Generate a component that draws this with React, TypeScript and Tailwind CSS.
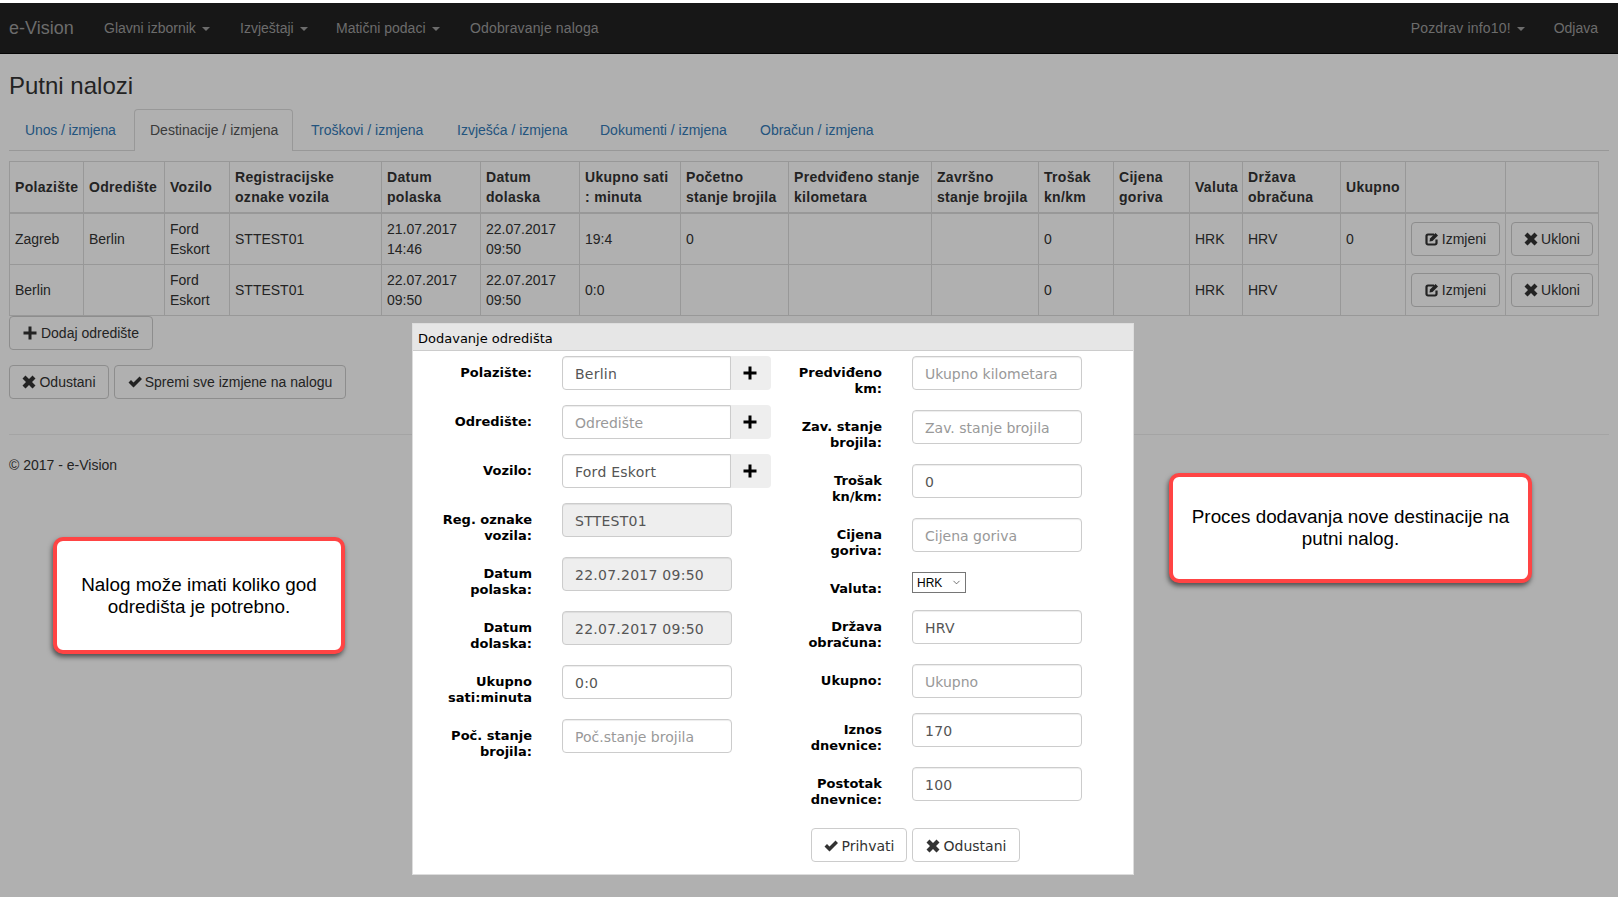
import type { ReactNode } from "react"
import { ChevronDown } from "lucide-react"

const stupci = ["w-[74px]", "w-[81px]", "w-[65px]", "w-[152px]", "w-[99px]", "w-[99px]", "w-[101px]", "w-[108px]", "w-[143px]", "w-[107px]", "w-[75px]", "w-[76px]", "w-[53px]", "w-[98px]", "w-[65px]", "w-[100px]", "w-[93px]"]

const zaglavlja = ["Polazište", "Odredište", "Vozilo", "Registracijske oznake vozila", "Datum polaska", "Datum dolaska", "Ukupno sati :\u00A0minuta", "Početno stanje brojila", "Predviđeno stanje kilometara", "Završno stanje brojila", "Trošak kn/km", "Cijena goriva", "Valuta", "Država obračuna", "Ukupno", "", ""]

const redovi = [
  ["Zagreb", "Berlin", "Ford Eskort", "STTEST01", "21.07.2017 14:46", "22.07.2017 09:50", "19:4", "0", "", "", "0", "", "HRK", "HRV", "0"],
  ["Berlin", "", "Ford Eskort", "STTEST01", "22.07.2017 09:50", "22.07.2017 09:50", "0:0", "", "", "", "0", "", "HRK", "HRV", ""],
]

const izbornik = [
  { naziv: "Glavni izbornik", caret: true, sirina: "w-[136px]" },
  { naziv: "Izvještaji", caret: true, sirina: "w-[96px]" },
  { naziv: "Matični podaci", caret: true, sirina: "w-[134px]" },
  { naziv: "Odobravanje naloga", caret: false, sirina: "w-[165px] tracking-[0.15px]" },
]

const kartice = [
  { naziv: "Unos / izmjena", sirina: "w-[123px] tracking-[-0.13px]" },
  { naziv: "Destinacije / izmjena", sirina: "w-[159px]" },
  { naziv: "Troškovi / izmjena", sirina: "w-[144px]" },
  { naziv: "Izvješća / izmjena", sirina: "w-[141px]" },
  { naziv: "Dokumenti / izmjena", sirina: "w-[158px]" },
  { naziv: "Obračun / izmjena", sirina: "w-[150px]" },
]

function Plus({ className = "w-[14px] h-[14px]" }: { className?: string }) {
  return (
    <svg viewBox="0 0 14 14" className={className} fill="currentColor">
      <path d="M5.500 .5h3v5h5v3h-5v5h-3v-5h-5v-3h5z" />
    </svg>
  )
}

function Ukloni() {
  return (
    <svg viewBox="0 0 14 14" className="h-[14px] w-[14px]" fill="currentColor">
      <path d="M3.500 .5 7 4 10.500 .5 13.500 3.500 10 7l3.500 3.500-3 3L7 10l-3.500 3.500-3-3L4 7 .5 3.500z" />
    </svg>
  )
}

function Ok() {
  return (
    <svg viewBox="0 0 14 14" className="h-[14px] w-[14px]" fill="currentColor">
      <path d="M.5 7.500 3 5l2.500 2.500 6-6L14 4l-8.500 8.500z" />
    </svg>
  )
}

function Uredi() {
  return (
    <svg viewBox="0 0 14 14" className="h-[14px] w-[14px]">
      <path d="M9 2.500H3A1.500 1.500 0 0 0 1.500 4v7A1.500 1.500 0 0 0 3 12.500h7A1.500 1.500 0 0 0 11.500 11V7.500" fill="none" stroke="currentColor" strokeWidth="2.200" />
      <path d="M5 6.500 10.500 1l2.500 2.500-5.500 5.500-3 .5z" fill="currentColor" />
    </svg>
  )
}

function Gumb({ children, className = "" }: { children: ReactNode; className?: string }) {
  return (
    <button className={`flex h-[34px] items-center justify-center gap-[3px] rounded-[4px] border border-[#ccc] bg-white text-[14px] text-[#333] ${className}`}>
      {children}
    </button>
  )
}

function Caret() {
  return <span className="ml-[6px] inline-block h-0 w-0 border-x-4 border-t-4 border-x-transparent border-t-current align-middle" />
}

function Polje({ vrijednost, opis, onemoguceno, addon }: { vrijednost?: string; opis?: string; onemoguceno?: boolean; addon?: boolean }) {
  const ulaz = (
    <input
      readOnly
      disabled={onemoguceno}
      defaultValue={vrijednost}
      placeholder={opis}
      className={`h-[34px] border border-[#ccc] px-[12px] pt-[2px] text-[14px] tracking-[0.25px] text-[#555] shadow-[inset_0_1px_1px_rgba(0,0,0,0.075)] outline-none placeholder:tracking-[0px] placeholder:text-[#999] disabled:bg-[#eee] disabled:opacity-100 ${addon ? "w-[169px] rounded-l-[4px]" : "w-[170px] rounded-[4px]"}`}
    />
  )
  if (!addon) return ulaz
  return (
    <div className="flex">
      {ulaz}
      <span className="flex h-[34px] w-[40px] items-center justify-center rounded-r-[4px] bg-[#eee] pr-[2px] text-black">
        <Plus />
      </span>
    </div>
  )
}

function Red({ oznaka, visina, sirinaOznake, children }: { oznaka: ReactNode; visina: string; sirinaOznake: string; children: ReactNode }) {
  return (
    <div className={`flex items-start ${visina}`}>
      <label className={`${sirinaOznake} mr-[30px] pt-[9px] text-right text-[13px] font-bold leading-[16px] text-black`}>{oznaka}</label>
      {children}
    </div>
  )
}

function Oblacic({ className, children }: { className: string; children: ReactNode }) {
  return (
    <div className={`absolute z-20 flex items-center justify-center rounded-[10px] border-[4px] border-[#ff4444] bg-white text-center text-[18.85px] leading-[22px] text-black shadow-[-1px_3px_5px_rgba(0,0,0,0.55)] ${className}`}>
      {children}
    </div>
  )
}

export default function App() {
  return (
    <div className="relative h-[897px] w-[1618px] overflow-hidden bg-white text-[14px] leading-[20px] text-[#333] [font-family:Liberation_Sans,Arial,sans-serif]">
      {/* stranica ispod modala */}
      <nav className="mt-[3px] flex h-[51px] items-center border-b border-[#080808] bg-[#222] pb-px pl-[9px] pr-[5px] text-[#9d9d9d]">
        <span className="w-[80px] text-[18px]">e-Vision</span>
        {izbornik.map((i) => (
          <span key={i.naziv} className={`px-[15px] whitespace-nowrap ${i.sirina}`}>
            {i.naziv}
            {i.caret && <Caret />}
          </span>
        ))}
        <span className="ml-auto w-[143px] px-[15px] tracking-[0.2px] whitespace-nowrap">
          Pozdrav info10!
          <Caret />
        </span>
        <span className="px-[15px]">Odjava</span>
      </nav>

      <div className="px-[9px]">
        <h2 className="mt-[19px] mb-[10px] h-[26px] text-[24px] leading-[26px]">Putni nalozi</h2>

        <ul className="flex h-[42px] border-b border-[#ddd]">
          {kartice.map((k, i) => (
            <li
              key={k.naziv}
              className={`mr-[2px] whitespace-nowrap ${k.sirina} ${
                i === 1
                  ? "h-[42px] rounded-t-[4px] border border-b-0 border-[#ddd] bg-white px-[15px] py-[10px] text-[#555]"
                  : "h-[41px] px-[16px] py-[11px] text-[#337ab7]"
              }`}
            >
              {k.naziv}
            </li>
          ))}
        </ul>

        <table className="mt-[10px] w-[1589px] table-fixed border-collapse">
          <colgroup>
            {stupci.map((s, i) => (
              <col key={i} className={s} />
            ))}
          </colgroup>
          <thead>
            <tr>
              {zaglavlja.map((z, i) => (
                <th key={i} className="border border-b-2 border-[#ddd] p-[5px] text-left align-middle font-bold tracking-[0.3px]">
                  {z}
                </th>
              ))}
            </tr>
          </thead>
          <tbody>
            {redovi.map((r, ri) => (
              <tr key={ri}>
                {r.map((c, i) => (
                  <td key={i} className="border border-[#ddd] p-[5px] align-middle">
                    {c}
                  </td>
                ))}
                <td className="border border-[#ddd] p-[5px] align-middle">
                  <Gumb className="w-[89px]">
                    <Uredi />
                    Izmjeni
                  </Gumb>
                </td>
                <td className="border border-[#ddd] p-[5px] align-middle">
                  <Gumb className="w-[82px]">
                    <Ukloni />
                    Ukloni
                  </Gumb>
                </td>
              </tr>
            ))}
          </tbody>
        </table>

        <Gumb className="w-[144px]">
          <Plus className="mr-[1px] h-[14px] w-[14px]" />
          Dodaj odredište
        </Gumb>
        <div className="mt-[15px] flex gap-[5px]">
          <Gumb className="w-[100px]">
            <Ukloni />
            Odustani
          </Gumb>
          <Gumb className="w-[232px]">
            <Ok />
            Spremi sve izmjene na nalogu
          </Gumb>
        </div>
        <hr className="mt-[35px] border-[#eee]" />
        <footer className="mt-[20px]">© 2017 - e-Vision</footer>
      </div>

      <div className="absolute inset-x-0 top-[3px] bottom-0 z-10 bg-black/[0.31]" />

      {/* modal */}
      <div className="absolute top-[323px] left-[412px] z-20 h-[552px] w-[722px] border border-[#ddd] bg-white [font-family:DejaVu_Sans,Verdana,sans-serif]">
        <div className="h-[27px] border-b border-[#ccc] bg-[#e6e6e6] pl-[5px] text-[13px] leading-[30px] text-black">Dodavanje odredišta</div>
        <div className="absolute top-[32px] left-0 w-[360px]">
          <Red oznaka="Polazište:" visina="h-[49px]" sirinaOznake="w-[119px]"><Polje vrijednost="Berlin" addon /></Red>
          <Red oznaka="Odredište:" visina="h-[49px]" sirinaOznake="w-[119px]"><Polje opis="Odredište" addon /></Red>
          <Red oznaka="Vozilo:" visina="h-[49px]" sirinaOznake="w-[119px]"><Polje vrijednost="Ford Eskort" addon /></Red>
          <Red oznaka={<>Reg. oznake<br />vozila:</>} visina="h-[54px]" sirinaOznake="w-[119px]"><Polje vrijednost="STTEST01" onemoguceno /></Red>
          <Red oznaka={<>Datum<br />polaska:</>} visina="h-[54px]" sirinaOznake="w-[119px]"><Polje vrijednost="22.07.2017 09:50" onemoguceno /></Red>
          <Red oznaka={<>Datum<br />dolaska:</>} visina="h-[54px]" sirinaOznake="w-[119px]"><Polje vrijednost="22.07.2017 09:50" onemoguceno /></Red>
          <Red oznaka={<>Ukupno<br />sati:minuta</>} visina="h-[54px]" sirinaOznake="w-[119px]"><Polje vrijednost="0:0" /></Red>
          <Red oznaka={<>Poč. stanje<br />brojila:</>} visina="h-[54px]" sirinaOznake="w-[119px]"><Polje opis="Poč.stanje brojila" /></Red>
        </div>
        <div className="absolute top-[32px] left-[349px] w-[360px]">
          <Red oznaka={<>Predviđeno<br />km:</>} visina="h-[54px]" sirinaOznake="w-[120px]"><Polje opis="Ukupno kilometara" /></Red>
          <Red oznaka={<>Zav. stanje<br />brojila:</>} visina="h-[54px]" sirinaOznake="w-[120px]"><Polje opis="Zav. stanje brojila" /></Red>
          <Red oznaka={<>Trošak<br />kn/km:</>} visina="h-[54px]" sirinaOznake="w-[120px]"><Polje vrijednost="0" /></Red>
          <Red oznaka={<>Cijena<br />goriva:</>} visina="h-[54px]" sirinaOznake="w-[120px]"><Polje opis="Cijena goriva" /></Red>
          <Red oznaka="Valuta:" visina="h-[38px]" sirinaOznake="w-[120px]">
            <div className="relative h-[21px] w-[54px]">
              <select defaultValue="HRK" className="h-[21px] w-[54px] appearance-none rounded-none border border-[#767676] bg-white pt-px pl-[4px] text-[12px] leading-[19px] text-black [font-family:Liberation_Sans,Arial,sans-serif]">
                <option>HRK</option>
              </select>
              <ChevronDown size={11} strokeWidth={1.5} className="pointer-events-none absolute top-[5px] right-[4px] text-[#333]" />
            </div>
          </Red>
          <Red oznaka={<>Država<br />obračuna:</>} visina="h-[54px]" sirinaOznake="w-[120px]"><Polje vrijednost="HRV" /></Red>
          <Red oznaka="Ukupno:" visina="h-[49px]" sirinaOznake="w-[120px]"><Polje opis="Ukupno" /></Red>
          <Red oznaka={<>Iznos<br />dnevnice:</>} visina="h-[54px]" sirinaOznake="w-[120px]"><Polje vrijednost="170" /></Red>
          <Red oznaka={<>Postotak<br />dnevnice:</>} visina="h-[61px]" sirinaOznake="w-[120px]"><Polje vrijednost="100" /></Red>
          <div className="ml-[49px] flex gap-[5px]">
            <Gumb className="w-[96px] gap-[4px] pt-px">
              <Ok />
              Prihvati
            </Gumb>
            <Gumb className="w-[108px] gap-[4px] pt-px">
              <Ukloni />
              Odustani
            </Gumb>
          </div>
        </div>
      </div>

      <Oblacic className="top-[537px] left-[53px] h-[117px] w-[292px] px-[12px]">
        Nalog može imati koliko god odredišta je potrebno.
      </Oblacic>
      <Oblacic className="top-[473px] left-[1169px] h-[110px] w-[363px] px-[12px]">
        Proces dodavanja nove destinacije na putni nalog.
      </Oblacic>
    </div>
  )
}
